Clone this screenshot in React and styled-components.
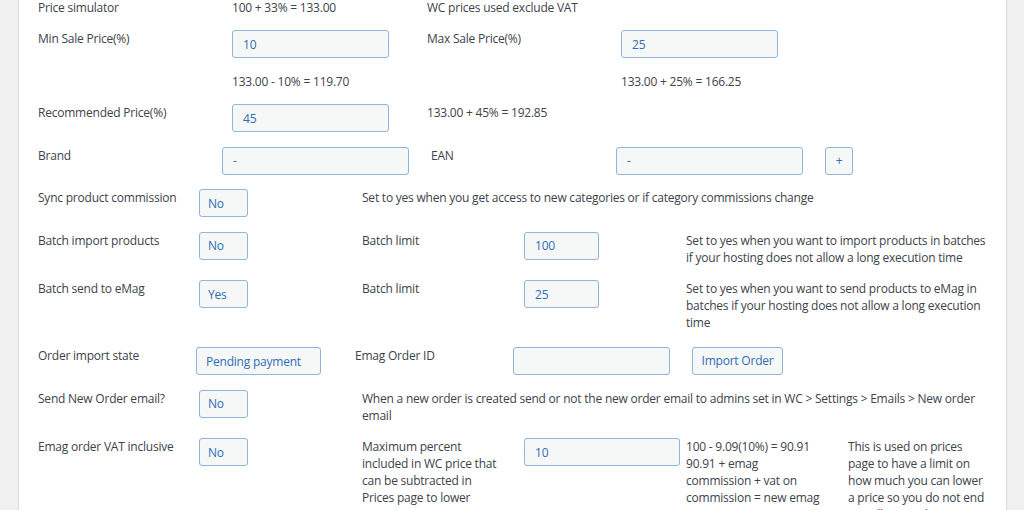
import styled, { createGlobalStyle } from "styled-components";

const GlobalStyle = createGlobalStyle`
  html, body {
    margin: 0;
    padding: 0;
    background: #f0f0f1;
  }
  body {
    font-family: "Open Sans", "Noto Sans", sans-serif;
    font-size: 12px;
    letter-spacing: -0.22px;
    color: #3c434a;
  }
`;

const Page = styled.div`
  height: 510px;
  display: flex;
  padding: 0 17px 0 18px;
  background: #f0f0f1;
  overflow: hidden;
`;

const Panel = styled.div`
  flex: 1;
  background: #fff;
  border-left: 1px solid #dcdcde;
  border-right: 1px solid #dcdcde;
  padding: 0 18px 0 19px;
  display: flex;
  flex-direction: column;
  gap: 14.5px;
`;

const Row = styled.div`
  display: grid;
  grid-template-columns: ${(p) => p.$cols};
  align-items: start;
  line-height: 17px;
  margin-top: ${(p) => p.$offset || 0}px;
`;

const Cell = styled.div`
  min-width: 0;
  padding-right: ${(p) => p.$pad ?? 0}px;
  grid-column: ${(p) => p.$span || "auto"};
`;

const Field = styled.div`
  box-sizing: border-box;
  width: ${(p) => p.$w}px;
  height: 28px;
  padding: 0 ${(p) => p.$px ?? 10}px;
  display: flex;
  align-items: center;
  background: #f6f7f7;
  border: 1px solid #8fb5dc;
  border-radius: 3px;
  color: #2f6db5;
  white-space: nowrap;
`;

const Button = styled.button`
  box-sizing: border-box;
  height: 28px;
  width: ${(p) => p.$w}px;
  padding: 0;
  background: #f6f7f7;
  border: 1px solid #8fb5dc;
  border-radius: 3px;
  color: #2f6db5;
  font: inherit;
  letter-spacing: inherit;
  line-height: 1;
  cursor: pointer;
`;

const colsA = "194px 195px 194px 1fr";
const colsB = "184px 209px 185px 209px 1fr";
const colsC = "161px 163px 162px 162px 162px 1fr";
const colsD = "158px 159px 158px 179px 1fr";

function App() {
  return (
    <>
      <GlobalStyle />
      <Page>
        <Panel>
          <Row $cols={colsA} $offset={-1.5}>
            <Cell>Price simulator</Cell>
            <Cell>100 + 33% = 133.00</Cell>
            <Cell $span="3 / 5">WC prices used exclude VAT</Cell>
          </Row>

          <Row $cols={colsA}>
            <Cell>Min Sale Price(%)</Cell>
            <Cell>
              <Field $w={157}>10</Field>
            </Cell>
            <Cell>Max Sale Price(%)</Cell>
            <Cell>
              <Field $w={157}>25</Field>
            </Cell>
          </Row>

          <Row $cols={colsA}>
            <Cell />
            <Cell>133.00 - 10% = 119.70</Cell>
            <Cell />
            <Cell>133.00 + 25% = 166.25</Cell>
          </Row>

          <Row $cols={colsA}>
            <Cell>Recommended Price(%)</Cell>
            <Cell>
              <Field $w={157}>45</Field>
            </Cell>
            <Cell $span="3 / 5">133.00 + 45% = 192.85</Cell>
          </Row>

          <Row $cols={colsB}>
            <Cell>Brand</Cell>
            <Cell>
              <Field $w={187}>-</Field>
            </Cell>
            <Cell>EAN</Cell>
            <Cell>
              <Field $w={187}>-</Field>
            </Cell>
            <Cell>
              <Button $w={28}>+</Button>
            </Cell>
          </Row>

          <Row $cols={colsC}>
            <Cell>Sync product commission</Cell>
            <Cell>
              <Field $w={49} $px={8}>No</Field>
            </Cell>
            <Cell $span="3 / 7">
              Set to yes when you get access to new categories or if category
              commissions change
            </Cell>
          </Row>

          <Row $cols={colsC}>
            <Cell>Batch import products</Cell>
            <Cell>
              <Field $w={49} $px={8}>No</Field>
            </Cell>
            <Cell>Batch limit</Cell>
            <Cell>
              <Field $w={75}>100</Field>
            </Cell>
            <Cell $span="5 / 7">
              Set to yes when you want to import products in batches if your
              hosting does not allow a long execution time
            </Cell>
          </Row>

          <Row $cols={colsC}>
            <Cell>Batch send to eMag</Cell>
            <Cell>
              <Field $w={49} $px={8}>Yes</Field>
            </Cell>
            <Cell>Batch limit</Cell>
            <Cell>
              <Field $w={75}>25</Field>
            </Cell>
            <Cell $span="5 / 7">
              Set to yes when you want to send products to eMag in batches if
              your hosting does not allow a long execution time
            </Cell>
          </Row>

          <Row $cols={colsD} $offset={1.5}>
            <Cell>Order import state</Cell>
            <Cell>
              <Field $w={125} $px={9}>Pending payment</Field>
            </Cell>
            <Cell>Emag Order ID</Cell>
            <Cell>
              <Field $w={157} />
            </Cell>
            <Cell>
              <Button $w={91}>Import Order</Button>
            </Cell>
          </Row>

          <Row $cols={colsC}>
            <Cell>Send New Order email?</Cell>
            <Cell>
              <Field $w={49} $px={8}>No</Field>
            </Cell>
            <Cell $span="3 / 7">
              When a new order is created send or not the new order email to
              admins set in WC &gt; Settings &gt; Emails &gt; New order email
            </Cell>
          </Row>

          <Row $cols={colsC}>
            <Cell>Emag order VAT inclusive</Cell>
            <Cell>
              <Field $w={49} $px={8}>No</Field>
            </Cell>
            <Cell $pad={24}>
              Maximum percent included in WC price that can be subtracted in
              Prices page to lower emag price
            </Cell>
            <Cell>
              <Field $w={156}>10</Field>
            </Cell>
            <Cell $pad={24}>
              100 - 9.09(10%) = 90.91 90.91 + emag commission + vat on
              commission = new emag price
            </Cell>
            <Cell>
              This is used on prices page to have a limit on how much you can
              lower a price so you do not end up selling at a loss
            </Cell>
          </Row>
        </Panel>
      </Page>
    </>
  );
}

export default App;
